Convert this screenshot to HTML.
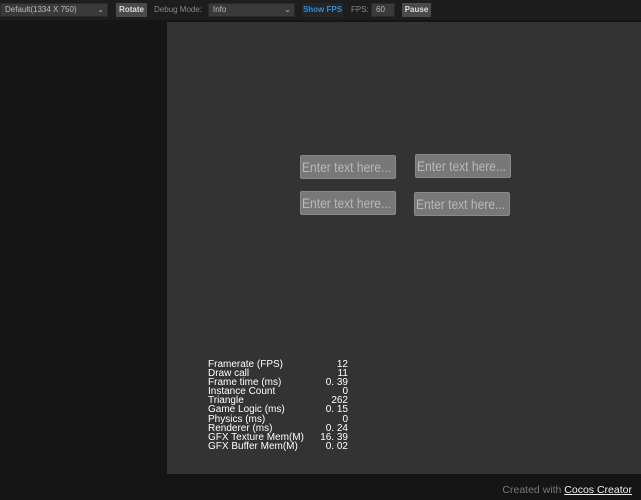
<!DOCTYPE html>
<html><head><style>
body{margin:0;width:641px;height:500px;background:#151515;font-family:"Liberation Sans",sans-serif;position:relative;overflow:hidden}
.tb{position:absolute;top:0;left:0;width:641px;height:20px;background:#1d1d1d}
.a{position:absolute;font-size:8px;line-height:14px}
.sel{position:absolute;top:3px;height:14px;background:#3a3a3a;border:1px solid #2a2a2a;box-sizing:border-box;color:#bbb;font-size:8px;line-height:12px;padding-left:4px}
.btn{position:absolute;top:3px;height:14px;background:#4a4a4a;color:#ddd;font-size:8px;font-weight:bold;line-height:14px;text-align:center}
.cv{position:absolute;left:167px;top:22px;width:474px;height:452px;background:#333}
.eb{position:absolute;width:96px;height:24px;box-sizing:border-box;background:#787878;border:1px solid #8a8a8a;border-radius:2px;color:#b8b8b8;font-size:14px;line-height:22px;padding-left:1px;white-space:nowrap;overflow:hidden}
.eb span{display:inline-block;transform:scaleX(0.86);transform-origin:left}
.st{position:absolute;left:208px;top:360px;width:140px;font-size:10px;line-height:9.1px;color:#fff}
.st div{display:flex;justify-content:space-between}
</style></head><body>
<div class="tb"></div>
<div class="sel" style="left:0;width:108px">Default(1334 X 750)<span style="position:absolute;right:3px">⌄</span></div>
<div class="btn" style="left:116px;width:31px">Rotate</div>
<div class="a" style="left:154px;top:3px;color:#888">Debug Mode:</div>
<div class="sel" style="left:208px;width:87px">Info<span style="position:absolute;right:3px">⌄</span></div>
<div class="btn" style="left:302px;width:41px;background:#252525;color:#2a8ee0">Show FPS</div>
<div class="a" style="left:351px;top:3px;color:#888">FPS:</div>
<div class="sel" style="left:371px;width:24px;background:#3a3a3a">60</div>
<div class="btn" style="left:402px;width:29px">Pause</div>
<div class="cv"></div>
<div class="eb" style="left:300px;top:155px"><span>Enter text here...</span></div>
<div class="eb" style="left:415px;top:154px"><span>Enter text here...</span></div>
<div class="eb" style="left:300px;top:191px"><span>Enter text here...</span></div>
<div class="eb" style="left:414px;top:192px"><span>Enter text here...</span></div>
<div class="st">
<div><span>Framerate (FPS)</span><span>12</span></div>
<div><span>Draw call</span><span>11</span></div>
<div><span>Frame time (ms)</span><span>0. 39</span></div>
<div><span>Instance Count</span><span>0</span></div>
<div><span>Triangle</span><span>262</span></div>
<div><span>Game Logic (ms)</span><span>0. 15</span></div>
<div><span>Physics (ms)</span><span>0</span></div>
<div><span>Renderer (ms)</span><span>0. 24</span></div>
<div><span>GFX Texture Mem(M)</span><span>16. 39</span></div>
<div><span>GFX Buffer Mem(M)</span><span>0. 02</span></div>
</div>
<div style="position:absolute;right:9px;top:484px;font-size:10.5px;color:#777">Created with <span style="color:#eee;text-decoration:underline">Cocos Creator</span></div>
</body></html>
